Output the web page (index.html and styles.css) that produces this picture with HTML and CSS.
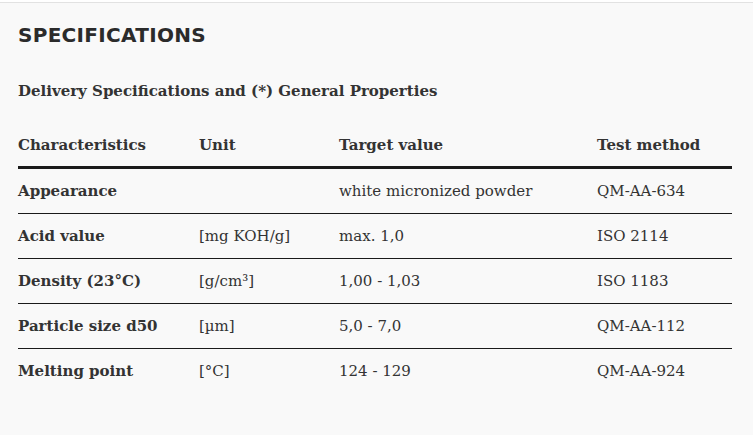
FILE: index.html
```html
<!DOCTYPE html>
<html>
<head>
<meta charset="utf-8">
<link rel="stylesheet" href="styles.css">
</head>
<body>
<div class="topline"></div>
<section class="specs">
  <h2 class="title">SPECIFICATIONS</h2>
  <h3 class="subtitle">Delivery Specifications and (*) General Properties</h3>
  <table class="spec-table">
    <thead>
      <tr><th class="c1">Characteristics</th><th class="c2">Unit</th><th class="c3">Target value</th><th class="c4">Test method</th></tr>
    </thead>
    <tbody>
      <tr><td class="name">Appearance</td><td></td><td>white micronized powder</td><td>QM-AA-634</td></tr>
      <tr><td class="name">Acid value</td><td>[mg KOH/g]</td><td>max. 1,0</td><td>ISO 2114</td></tr>
      <tr><td class="name">Density (23°C)</td><td>[g/cm³]</td><td>1,00 - 1,03</td><td>ISO 1183</td></tr>
      <tr><td class="name">Particle size d50</td><td>[µm]</td><td>5,0 - 7,0</td><td>QM-AA-112</td></tr>
      <tr><td class="name">Melting point</td><td>[°C]</td><td>124 - 129</td><td>QM-AA-924</td></tr>
    </tbody>
  </table>
</section>
</body>
</html>
```
FILE: styles.css
```css
html, body {
  margin: 0;
  padding: 0;
  background: #f9f9f9;
}
.topline {
  height: 2px;
  background: #ffffff;
  border-bottom: 1px solid #e2e2e2;
}
.specs {
  padding: 17px 21px 0 18px;
  color: #333333;
  font-family: "DejaVu Serif", serif;
}
.title {
  margin: 0;
  font-family: "DejaVu Sans", sans-serif;
  font-weight: bold;
  font-size: 20px;
  letter-spacing: 0.3px;
  line-height: 30px;
  color: #2b2b2b;
}
.subtitle {
  margin: 29px 0 0 0;
  font-size: 15px;
  font-weight: bold;
  line-height: 24px;
}
.spec-table {
  width: 714px;
  margin-top: 30px;
  border-collapse: collapse;
  font-size: 15px;
}
.spec-table th {
  text-align: left;
  font-weight: bold;
  padding: 0 0 9px 0;
  line-height: 24px;
  border-bottom: 3px solid #1a1a1a;
}
.spec-table td {
  padding: 0;
  height: 44px;
  line-height: 24px;
  vertical-align: middle;
  border-bottom: 1px solid #1a1a1a;
}
.spec-table tbody tr:last-child td {
  border-bottom: none;
}
.spec-table td.name {
  font-weight: bold;
}
.c1 { width: 181px; }
.c2 { width: 140px; }
.c3 { width: 258px; }
```
